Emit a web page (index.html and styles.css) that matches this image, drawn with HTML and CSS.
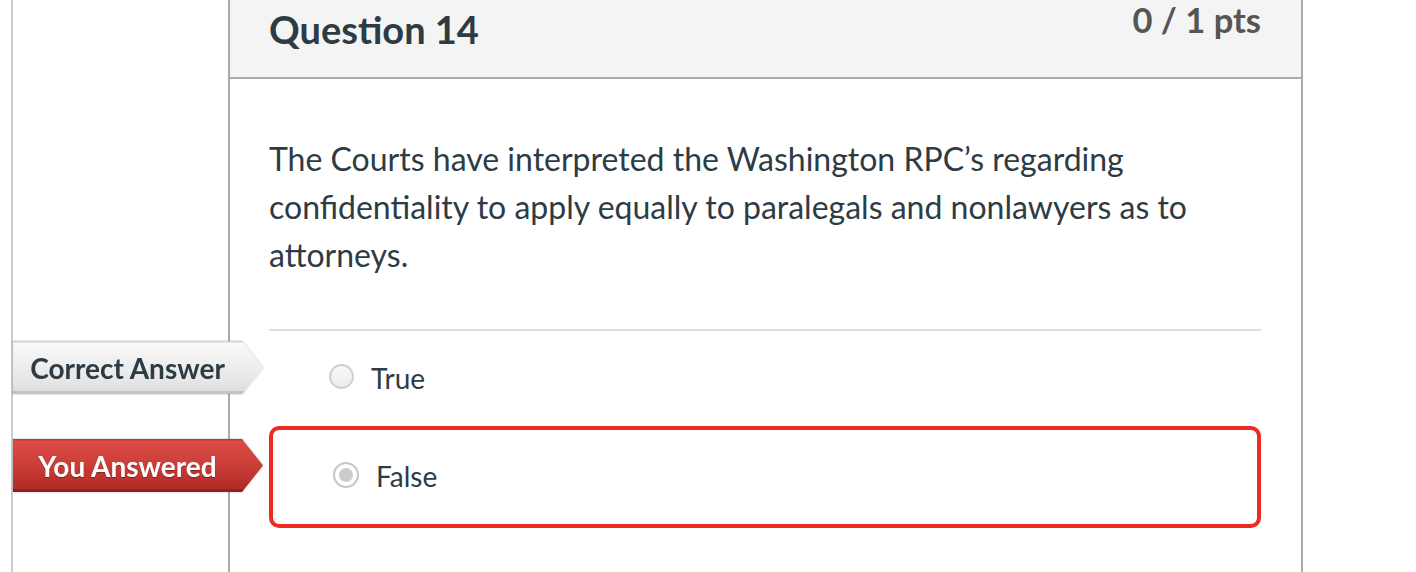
FILE: index.html
```html
<!DOCTYPE html>
<html lang="en">
<head>
<meta charset="utf-8">
<title>Question 14</title>
<link rel="stylesheet" href="styles.css">
</head>
<body>
<div class="page">
  <div class="gutter"></div>
  <div class="question">
    <div class="q-header">
      <h2 class="q-title">Question 14</h2>
      <div class="q-points">0 / 1 pts</div>
    </div>
    <div class="q-body">
      <p class="q-text">The Courts have interpreted the Washington RPC’s regarding confidentiality to apply equally to paralegals and nonlawyers as to attorneys.</p>
      <div class="answers">
        <div class="answer">
          <div class="tag tag-correct"><div class="tag-shape">Correct Answer</div></div>
          <span class="radio"></span>
          <span class="answer-text">True</span>
        </div>
        <div class="answer answer-wrong">
          <div class="tag tag-wrong"><div class="tag-shape">You Answered</div></div>
          <span class="radio radio-checked"></span>
          <span class="answer-text">False</span>
        </div>
      </div>
    </div>
  </div>
</div>
</body>
</html>
```
FILE: styles.css
```css
* { box-sizing: border-box; }
html, body { margin: 0; padding: 0; background: #fff; }
body {
  font-family: Lato, "Open Sans", "Liberation Sans", sans-serif;
  color: #2d3b45;
}
.page {
  display: flex;
  height: 572px;
  overflow: hidden;
}
.gutter {
  margin-left: 11px;
  width: 217px;
  border-left: 2px solid #c8cdd1;
  flex: none;
}
.question {
  width: 1075px;
  flex: none;
  border-left: 2px solid #aaaaaa;
  border-right: 2px solid #aaaaaa;
}
.q-header {
  height: 79px;
  background: #f4f4f4;
  border-bottom: 2px solid #aaaaaa;
  display: flex;
  justify-content: space-between;
  align-items: flex-start;
  padding: 0 40px 0 39px;
}
.q-title {
  margin: 7px 0 0 0;
  font-size: 38px;
  line-height: 1.2;
  font-weight: 700;
  color: #2d3b45;
}
.q-points {
  margin-top: -1px;
  font-size: 34.5px;
  line-height: 1.2;
  font-weight: 700;
  color: #565656;
}
.q-body {
  padding: 0 40px 0 39px;
}
.q-text {
  margin: 56px 0 0 0;
  font-size: 32px;
  line-height: 48px;
}
.answers {
  margin-top: 50px;
  border-top: 2px solid #dddddd;
}
.answer {
  position: relative;
  height: 95px;
  display: flex;
  align-items: center;
  padding-left: 60px;
}
.answer-wrong {
  height: 102px;
  border: 4px solid #ee2a22;
  border-radius: 10px;
}
.radio {
  width: 25px;
  height: 25px;
  border-radius: 50%;
  border: 2px solid #d0d0d0;
  background: linear-gradient(#f9f9f9, #ececec);
  margin-bottom: 4px;
  flex: none;
}
.radio-checked {
  width: 26px;
  height: 26px;
  border-color: #c8c8c8;
  background: #cccccc;
  box-shadow: inset 0 0 0 4px #ffffff;
}
.answer-text {
  margin-left: 17px;
  font-size: 28px;
  line-height: 1.2;
}
.tag {
  position: absolute;
  width: 250px;
  height: 53px;
  filter: drop-shadow(0 0 1px rgba(0,0,0,0.25));
}
.answer .tag { left: -256px; top: 10px; }
.answer-wrong .tag { left: -260px; top: 9px; }
.tag-shape {
  width: 100%;
  height: 100%;
  display: flex;
  align-items: center;
  justify-content: center;
  padding-right: 21px;
  font-size: 28px;
  font-weight: 700;
  clip-path: polygon(0 0, 229px 0, 250px 50%, 229px 100%, 0 100%);
}
.tag-correct .tag-shape {
  color: #2d3b45;
  background: linear-gradient(#d4d4d4 0, #d4d4d4 1px, #f9f9f9 2px, #e8e8e8 70%, #dedede 94%, #c2c2c2 94%, #c2c2c2 100%);
}
.tag-wrong .tag-shape {
  color: #ffffff;
  text-shadow: 0 1px 1px rgba(0,0,0,0.35);
  background: linear-gradient(#b83a36 0, #b83a36 1px, #dc4d47 2px, #c93b35 55%, #b02a26 94%, #8f2020 94%, #8f2020 100%);
}
```
